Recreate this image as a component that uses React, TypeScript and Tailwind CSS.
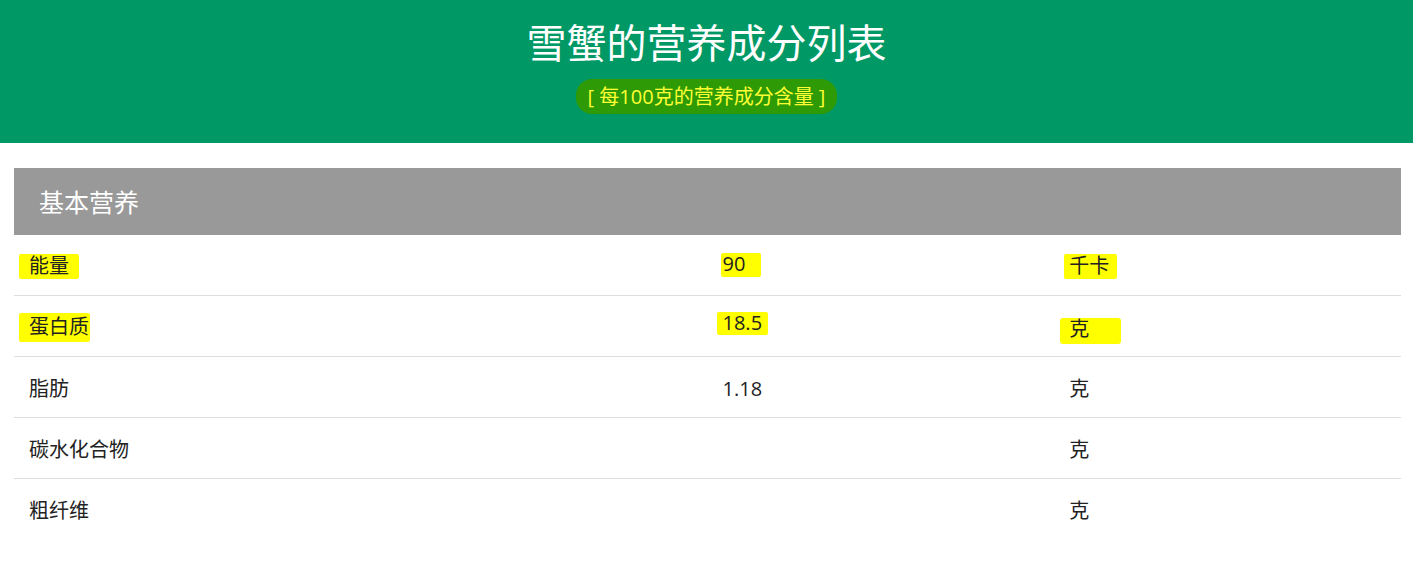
const rows = [
  { name: "能量", value: "90", unit: "千卡", mark: true },
  { name: "蛋白质", value: "18.5", unit: "克", mark: true },
  { name: "脂肪", value: "1.18", unit: "克" },
  { name: "碳水化合物", value: "", unit: "克" },
  { name: "粗纤维", value: "", unit: "克" },
];

const markClass = [
  ["-ml-[10px] pl-[10px] pr-[10px] pt-[1px] pb-[2px] rounded-[2px]", "-ml-[2px] pl-[2px] pr-[16px] pb-[2px] -mt-[3px] rounded-[2px]", "-ml-[5px] pl-[5px] pr-[8px] pt-[1px] pb-[2px] rounded-[2px]"],
  ["-ml-[10px] pl-[10px] pr-[1px] pt-[3px] pb-[4px] rounded-[2px]", "-ml-[6px] pl-[6px] pr-[6px] pb-[1px] -mt-[8px] rounded-[2px]", "-ml-[9px] pl-[9px] pr-[32px] pb-[4px] mt-[6px] rounded-[3px]"],
];

export default function App() {
  return (
    <div className="min-h-screen bg-white font-['Open_Sans','Noto_Sans_CJK_SC',sans-serif] text-[#222]">
      <header className="h-[143px] bg-[#009966] flex flex-col items-center pt-[19px]">
        <h1 className="text-[40px] leading-[48px] text-white">雪蟹的营养成分列表</h1>
        <div className="mt-[12px] bg-[#2e9a05] rounded-[16px] px-[12px] py-[5px] text-[20px] leading-[25px] text-[#ffff33]">
          [ 每100克的营养成分含量 ]
        </div>
      </header>

      <section className="ml-[14px] mr-[12px] mt-[25px]">
        <div className="h-[67px] bg-[#999999] flex items-center px-[25px] pt-[2px] text-[25px] text-white">基本营养</div>
        <div className="grid grid-cols-[2fr_1fr_1fr] text-[20px]">
          {rows.map((r, i) => (
            <div key={r.name} className="contents">
              {[r.name, r.value, r.unit].map((cell, j) => (
                <div
                  key={j}
                  className={`h-[61px] flex items-center px-[15px] pt-[3px] ${i < rows.length - 1 ? "border-b border-[#dddddd]" : ""}`}
                >
                  {r.mark && cell ? (
                    <span className={`inline-block bg-[#ffff00] leading-[22px] ${markClass[i][j]}`}>{cell}</span>
                  ) : (
                    <span>{cell}</span>
                  )}
                </div>
              ))}
            </div>
          ))}
        </div>
      </section>
    </div>
  );
}
